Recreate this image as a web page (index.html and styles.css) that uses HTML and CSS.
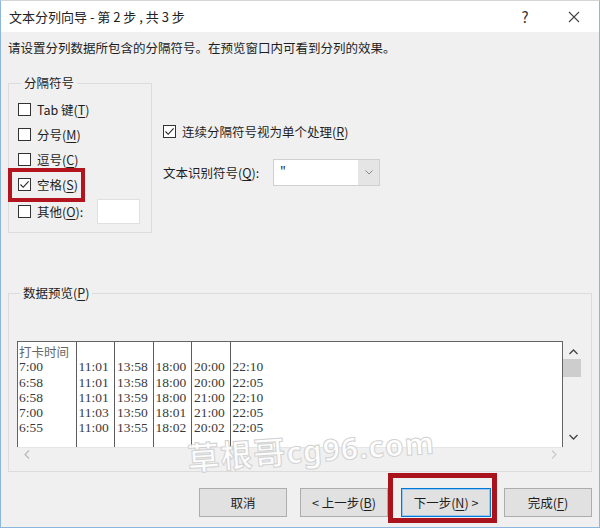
FILE: index.html
```html
<!DOCTYPE html>
<html lang="zh-CN">
<head>
  <meta charset="UTF-8">
  <title>文本分列向导</title>
  <link rel="stylesheet" href="styles.css">
</head>
<body>
  <div class="window">
    <div class="titlebar">
      <span class="title">文本分列向导 - 第 2 步 , 共 3 步</span>
      <span class="help">?</span>
      <span class="close">
        <svg width="12" height="12" viewBox="0 0 12 12"><path d="M1 1L11 11M11 1L1 11" stroke="#444" stroke-width="1.1" fill="none"/></svg>
      </span>
    </div>

    <div class="content">
      <div class="intro">请设置分列数据所包含的分隔符号。在预览窗口内可看到分列的效果。</div>

      <div class="top-row">
        <fieldset class="group delims">
          <legend>分隔符号</legend>
          <div class="row"><span class="box"></span>Tab 键(<u>T</u>)</div>
          <div class="row"><span class="box"></span>分号(<u>M</u>)</div>
          <div class="row"><span class="box"></span>逗号(<u>C</u>)</div>
          <div class="row marked">
            <span class="box"><svg width="11" height="11" viewBox="0 0 11 11"><path d="M1.5 5.5L4.2 8.3L9.6 2.4" stroke="#222" stroke-width="1.1" fill="none"/></svg></span>空格(<u>S</u>)
          </div>
          <div class="row other"><span class="box"></span>其他(<u>O</u>):<span class="other-input"></span></div>
        </fieldset>

        <div class="options">
          <div class="row">
            <span class="box"><svg width="11" height="11" viewBox="0 0 11 11"><path d="M1.5 5.5L4.2 8.3L9.6 2.4" stroke="#222" stroke-width="1.1" fill="none"/></svg></span>连续分隔符号视为单个处理(<u>R</u>)
          </div>
          <div class="qualifier">
            <span class="q-label">文本识别符号(<u>Q</u>):</span>
            <span class="combo">
              <span class="combo-value">"</span>
              <span class="combo-btn"><svg width="8" height="5" viewBox="0 0 8 5"><path d="M0.5 0.5L4 4L7.5 0.5" stroke="#888" fill="none"/></svg></span>
            </span>
          </div>
        </div>
      </div>

      <fieldset class="group preview-group">
        <legend>数据预览(<u>P</u>)</legend>
        <div class="preview">
          <div class="data">
            <div class="col first">
              <div class="cjk">打卡时间</div>
              <div>7:00</div><div>6:58</div><div>6:58</div><div>7:00</div><div>6:55</div>
            </div>
            <div class="col">
              <div>&nbsp;</div>
              <div>11:01</div><div>11:01</div><div>11:01</div><div>11:03</div><div>11:00</div>
            </div>
            <div class="col">
              <div>&nbsp;</div>
              <div>13:58</div><div>13:58</div><div>13:59</div><div>13:50</div><div>13:55</div>
            </div>
            <div class="col">
              <div>&nbsp;</div>
              <div>18:00</div><div>18:00</div><div>18:00</div><div>18:01</div><div>18:02</div>
            </div>
            <div class="col">
              <div>&nbsp;</div>
              <div>20:00</div><div>20:00</div><div>21:00</div><div>21:00</div><div>20:02</div>
            </div>
            <div class="col last">
              <div>&nbsp;</div>
              <div>22:10</div><div>22:05</div><div>22:10</div><div>22:05</div><div>22:05</div>
            </div>
          </div>
          <div class="vscroll">
            <svg width="9" height="6" viewBox="0 0 9 6"><path d="M0.5 5L4.5 1L8.5 5" stroke="#444" stroke-width="1.3" fill="none"/></svg>
            <span class="thumb"></span>
            <span class="spacer"></span>
            <svg width="9" height="6" viewBox="0 0 9 6"><path d="M0.5 1L4.5 5L8.5 1" stroke="#444" stroke-width="1.3" fill="none"/></svg>
          </div>
          <div class="hscroll">
            <svg width="6" height="9" viewBox="0 0 6 9"><path d="M5 0.5L1 4.5L5 8.5" stroke="#bbb" stroke-width="1.3" fill="none"/></svg>
            <svg width="6" height="9" viewBox="0 0 6 9"><path d="M1 0.5L5 4.5L1 8.5" stroke="#ccc" stroke-width="1.3" fill="none"/></svg>
          </div>
          <div class="corner"></div>
        </div>
      </fieldset>

      <div class="buttons">
        <button>取消</button>
        <button>&lt; 上一步(<u>B</u>)</button>
        <button class="default">下一步(<u>N</u>) &gt;</button>
        <button>完成(<u>F</u>)</button>
      </div>
    </div>

    <div class="watermark"><span class="wm-cjk">草根哥</span>cg96.com</div>
  </div>
</body>
</html>
```

FILE: styles.css
```css
*, *::before, *::after {
  box-sizing: border-box;
}

body {
  margin: 0;
  width: 600px;
  height: 528px;
  background: #fff;
  font-family: "Noto Sans CJK SC", "Noto Sans", sans-serif;
  font-size: 12.5px;
  color: #1e1e1e;
}

u {
  text-decoration-thickness: 1px;
  text-underline-offset: 2px;
}

.window {
  position: relative;
  width: 600px;
  height: 528px;
  border: 1px solid #8cb6de;
  border-top-color: #d6d6d6;
  background: #f0f0f0;
  overflow: hidden;
}

.titlebar {
  display: flex;
  align-items: center;
  height: 31px;
  padding-left: 8px;
  background: #fff;
  font-size: 13px;
  color: #222;
}

.title {
  flex: 1;
}

.help {
  width: 48px;
  text-align: center;
  font-size: 15px;
  color: #333;
  margin-right: 1px;
}

.close {
  display: flex;
  justify-content: center;
  width: 48px;
  margin-right: 1px;
}

.content {
  padding: 0 7px 0 7px;
}

.intro {
  margin-top: 7px;
  line-height: 18px;
}

.top-row {
  display: flex;
  gap: 11px;
  margin-top: 17px;
}

.group {
  margin: 0;
  border: 1px solid #dcdcdc;
  padding: 0;
}

.group legend {
  padding: 0 3px;
  margin-left: 3px;
  line-height: 18px;
}

.delims {
  width: 144px;
  height: 159px;
  padding: 5px 0 0 9px;
}

.row {
  display: flex;
  align-items: center;
  height: 25px;
  white-space: nowrap;
}

.box {
  display: flex;
  align-items: center;
  justify-content: center;
  width: 13px;
  height: 13px;
  margin-right: 6px;
  border: 1px solid #333;
  background: #fff;
  flex: none;
}

.marked {
  position: relative;
}

.marked::after {
  content: "";
  position: absolute;
  left: -10px;
  top: -4px;
  width: 77px;
  bottom: -5px;
  border: 4px solid #b3141d;
}

.row.other {
  height: 27px;
  margin-top: 1px;
}

.other-input {
  width: 43px;
  height: 25px;
  margin-left: 14px;
  background: #fff;
  border: 1px solid #e0e0e0;
}

.options {
  padding-top: 47px;
}

.options .row {
  height: 20px;
}

.qualifier {
  display: flex;
  align-items: center;
  margin-top: 18px;
  height: 27px;
}

.q-label {
  width: 110px;
}

.combo {
  display: flex;
  width: 107px;
  height: 27px;
  background: #fff;
  border: 1px solid #d0d0d0;
}

.combo-value {
  flex: 1;
  padding-left: 6px;
  line-height: 24px;
}

.combo-btn {
  display: flex;
  align-items: center;
  justify-content: center;
  width: 21px;
  background: #e5e5e5;
}

.preview-group {
  margin-top: 51px;
  padding: 39px 8px 11px 8px;
}

.preview {
  display: grid;
  grid-template-columns: 1fr 20px;
  grid-template-rows: 106px 13px;
}

.data {
  display: flex;
  background: #fff;
  border: 1px solid #646464;
  border-bottom: none;
  font-family: "Liberation Serif", serif;
  font-size: 13.5px;
  line-height: 15.25px;
  color: #3a3a3a;
  overflow: hidden;
}

.col {
  padding: 2px 0 0 2px;
  border-right: 1px solid #5c5c5c;
  width: 38.5px;
  flex: none;
}

.col.first {
  width: 58.5px;
  padding-left: 1px;
}

.col.last {
  border-right: none;
  flex: 1;
}

.cjk {
  font-family: "Noto Sans CJK SC", sans-serif;
  font-size: 12.5px;
  color: #666;
}

.vscroll {
  display: flex;
  flex-direction: column;
  align-items: center;
  padding: 8px 0 7px 0;
}

.thumb {
  width: 18px;
  height: 18px;
  margin: 4px 2px 0 0;
  background: #cdcdcd;
}

.spacer {
  flex: 1;
}

.hscroll {
  display: flex;
  align-items: center;
  justify-content: space-between;
  padding: 0 6px 0 7px;
  border-top: 1px solid #e6e6e6;
}

.buttons {
  display: flex;
  justify-content: flex-end;
  gap: 13px;
  margin-top: 16px;
}

.buttons button {
  width: 88px;
  height: 29px;
  padding: 0;
  font-family: inherit;
  font-size: 12.5px;
  color: #1e1e1e;
  background: #e1e1e1;
  border: 1px solid #adadad;
}

.buttons button.default {
  position: relative;
  width: 90px;
  border: 1px solid #0078d7;
  box-shadow: inset 0 0 0 1px #9cc8ee;
}

.buttons button.default::after {
  content: "";
  position: absolute;
  left: -14px;
  top: -16px;
  right: -7px;
  bottom: -7px;
  border: 5px solid #a9141c;
}

.watermark {
  position: absolute;
  left: 186px;
  top: 424px;
  transform: rotate(-4deg);
  font-family: "Noto Sans", sans-serif;
  font-weight: bold;
  font-size: 30px;
  color: rgba(255, 255, 255, 0.85);
  -webkit-text-stroke: 1px #d2d2d2;
  letter-spacing: 1px;
}

.wm-cjk {
  font-family: "Noto Sans CJK SC", sans-serif;
  font-size: 32px;
}
```
